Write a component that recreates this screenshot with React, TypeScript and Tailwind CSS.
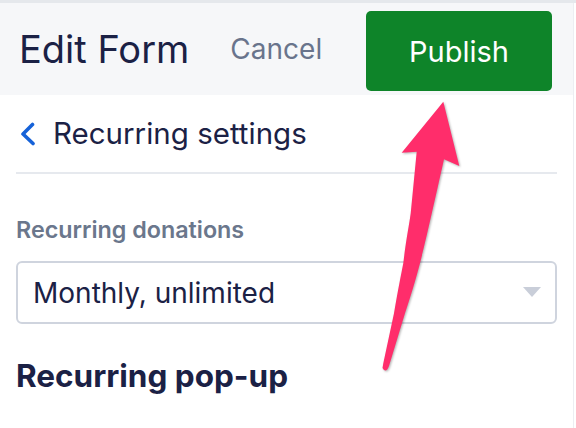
import React from "react";

const font = { fontFamily: "Inter, 'Liberation Sans', sans-serif" };

export default function App() {
  return (
    <div className="relative w-[576px] h-[428px] bg-white overflow-hidden" style={font}>
      <div className="h-[3px] bg-[#e5e8ec]" />
      <div className="w-[574px] border-r border-[#eceef2] h-[425px]">
        <div className="h-[92px] bg-[#f6f7f9] flex items-center pl-[19px] pr-[21px]">
          <span className="text-[38px] text-[#1b2145] leading-none">Edit Form</span>
          <span className="ml-[41px] text-[28px] text-[#69748c] leading-none">Cancel</span>
          <button className="ml-auto w-[186px] h-[80px] mt-[9px] mb-[5px] rounded-[5px] bg-[#0e8429] text-white text-[29px] leading-none">
            Publish
          </button>
        </div>
        <div className="px-[16px]">
          <div className="flex items-center h-[77px]">
            <svg width="16" height="24" viewBox="0 0 16 24" className="ml-[4px]">
              <path d="M12.5 2.5 L3 12 L13 21.5" fill="none" stroke="#1662d8" strokeWidth="3.6" strokeLinecap="round" strokeLinejoin="round" />
            </svg>
            <span className="ml-[17px] text-[29.5px] text-[#1b2145] leading-none">Recurring settings</span>
          </div>
          <div className="h-[2px] bg-[#e6e9ee]" />
          <div className="mt-[44px] text-[23.3px] font-semibold text-[#6b778c] leading-none">Recurring donations</div>
          <div className="mt-[20px] h-[63px] border-2 border-[#cfd4de] rounded-[6px] flex items-center pl-[15px] pr-[14px]">
            <span className="text-[28px] text-[#1b2145] leading-none">Monthly, unlimited</span>
            <svg width="18" height="11" viewBox="0 0 18 11" className="ml-auto">
              <path d="M0 0 H18 L9 10 Z" fill="#c9ced9" />
            </svg>
          </div>
          <div className="mt-[36px] text-[31.5px] font-bold text-[#1b2145] leading-none">Recurring pop-up</div>
        </div>
      </div>
      <svg className="absolute left-0 top-0 pointer-events-none" width="576" height="428" viewBox="0 0 576 428" style={{ filter: "drop-shadow(1px 1.5px 1px rgba(0,0,0,0.3))" }}>
        <path
          d="M443.3,101.7 L459.3,166 L444,159.3 C438,186 427,236 420,263.3 C414,286 410,298 405,313.3 L389,366 Q386,374 382.5,368 L383.3,363.3 L394,313.3 C398,290 401,275 403.3,263.3 C406,240 409,226 410.7,213.3 L416.7,151.7 L401.7,152.7 Z"
          fill="#ff2d6b"
        />
      </svg>
    </div>
  );
}
